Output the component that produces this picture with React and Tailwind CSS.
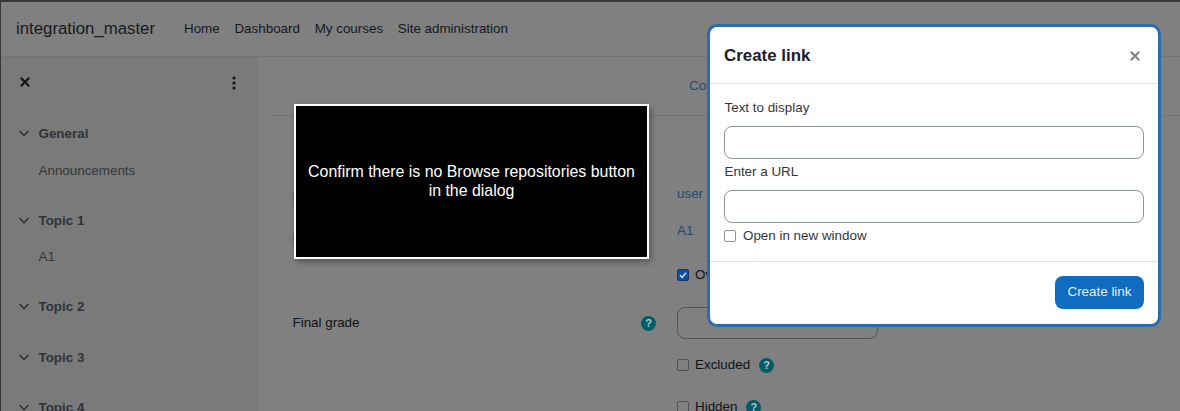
import React from "react";

const Chevron = () => (
  <svg width="12" height="12" viewBox="0 0 12 12" fill="none" className="shrink-0">
    <path d="M1.5 3 6 7.5 10.5 3" stroke="#33383d" strokeWidth="1.6" />
  </svg>
);

const Help = () => (
  <span className="inline-flex w-[15px] h-[15px] rounded-full bg-[#005c66] text-[#b5c9cc] text-[11px] font-bold leading-none items-center justify-center shrink-0">?</span>
);

function Topic({ title, item, className }) {
  return (
    <div className={className}>
      <div className="flex items-center h-[20px]">
        <span className="w-[12px] ml-[17px] mr-[8.5px] flex"><Chevron /></span>
        <span className="text-[13.4px] font-bold text-[#2f3338]">{title}</span>
      </div>
      {item && <div className="ml-[37.5px] mt-[17px] h-[20px] leading-[20px] text-[13.4px] text-[#33373b]">{item}</div>}
    </div>
  );
}

export default function App() {
  return (
    <div className="relative w-[1180px] h-[411px] overflow-hidden bg-[#808080] text-[13.4px] text-[#101214] font-['Liberation_Sans',Arial,sans-serif] border-l border-t-2 border-[#3a3538]">
      <header className="h-[55px] flex items-center border-b border-[#737373]">
        <span className="ml-[15px] text-[16.8px] text-[#17191c]">integration_master</span>
        <nav className="ml-[29px] flex gap-[14.7px] text-[13.4px] text-[#15181b]">
          <span>Home</span>
          <span>Dashboard</span>
          <span>My courses</span>
          <span>Site administration</span>
        </nav>
      </header>

      <div className="flex h-[354px]">
        <aside className="w-[257px] bg-[#7a7a7a] shrink-0 overflow-hidden">
          <div className="flex items-center justify-between h-[50px] pl-[19px] pr-[22px]">
            <svg width="10" height="10" viewBox="0 0 10 10"><path d="M.8.8l8.4 8.4m0-8.4L.8 9.2" stroke="#101214" strokeWidth="2" /></svg>
            <svg width="4" height="14" viewBox="0 0 4 14" className="mt-[2px]"><circle cx="2" cy="2" r="1.6" fill="#101214" /><circle cx="2" cy="7" r="1.6" fill="#101214" /><circle cx="2" cy="12" r="1.6" fill="#101214" /></svg>
          </div>
          <Topic title="General" item="Announcements" className="mt-[17px]" />
          <Topic title="Topic 1" className="mt-[30px]" />
          <div className="ml-[37.5px] mt-[16px] h-[20px] leading-[20px] text-[#33373b]">A1</div>
          <Topic title="Topic 2" className="mt-[30px]" />
          <Topic title="Topic 3" className="mt-[31px]" />
          <Topic title="Topic 4" className="mt-[30px]" />
        </aside>

        <main className="flex-1 min-w-0 pl-[14px]">
          <div className="h-[59px] border-b border-[#737373] pl-[417px] pt-[19px] leading-[20px] text-[#1d4a75]">Course</div>
          <div className="relative">
            <div className="flex h-[87px]">
              <div className="w-[405px] pt-[76px] pl-[21px]"><span className="block w-[2px] h-[9px] bg-[#6f6350]" /></div>
              <div className="pt-[68px] text-[#1d4a75]">user competency</div>
            </div>
            <div className="flex h-[38px]">
              <div className="w-[405px] pt-[31px] pl-[21px]"><span className="block w-[2px] h-[8px] bg-[#6f6350]" /></div>
              <div className="pt-[18px] text-[#1d4a75]">A1</div>
            </div>
            <div className="ml-[405px] mt-[24px] h-[20px] flex items-center gap-[6px]">
              <span className="w-[12px] h-[12px] rounded-[2px] bg-[#0b4f9e] border border-[#1a3560] flex items-center justify-center">
                <svg width="10" height="10" viewBox="0 0 10 10"><path d="M2 5.2l2.2 2.2L8 2.8" stroke="#d5dde8" strokeWidth="1.6" fill="none" /></svg>
              </span>
              <span>Overall</span>
            </div>
            <div className="flex mt-[22px] h-[32px]">
              <div className="w-[385px] pl-[20.5px] pr-[1px] flex items-center justify-between">
                <span>Final grade</span>
                <Help />
              </div>
              <div className="ml-[20px] w-[201px] h-[32px] rounded-[8px] border border-[#4e5256]" />
            </div>
            <div className="ml-[405px] mt-[16px] h-[20px] flex items-center">
              <span className="w-[12px] h-[12px] rounded-[2px] border border-[#4e5256]" />
              <span className="ml-[6px]">Excluded</span>
              <span className="ml-[9px] flex"><Help /></span>
            </div>
            <div className="ml-[405px] mt-[22px] h-[20px] flex items-center">
              <span className="w-[12px] h-[12px] rounded-[2px] border border-[#4e5256]" />
              <span className="ml-[6px]">Hidden</span>
              <span className="ml-[9px] flex"><Help /></span>
            </div>
          </div>
        </main>
      </div>

      {/* Tour step callout */}
      <div className="absolute left-[293px] top-[102px] w-[355px] h-[155px] bg-black border-2 border-white shadow-[2px_3px_6px_rgba(0,0,0,0.35)] flex items-center justify-center text-center text-white text-[15.9px] leading-[19px] px-[8px] pb-[1px]">
        Confirm there is no Browse repositories button in the dialog
      </div>

      {/* Modal */}
      <div className="absolute left-[706px] top-[22px] w-[454px] h-[303px] bg-white border-[3px] border-[#2a6cad] rounded-[10px] flex flex-col text-[13.4px] text-[#33373b]">
        <div className="h-[57px] flex items-center justify-between pl-[14px] pr-[18px] pt-[1px] border-b border-[#dee2e6] shrink-0">
          <span className="text-[16.9px] font-bold text-[#1d2125]">Create link</span>
          <svg width="10" height="10" viewBox="0 0 10 10"><path d="M.8.8l8.4 8.4m0-8.4L.8 9.2" stroke="#808080" strokeWidth="2" /></svg>
        </div>
        <div className="flex-1 px-[14px] pt-[14px]">
          <div className="h-[20px] leading-[20px] pl-[0.5px]">Text to display</div>
          <div className="mt-[8px] h-[33px] rounded-[8px] border border-[#8f959e]" />
          <div className="mt-[3px] h-[20px] leading-[20px] pl-[0.5px]">Enter a URL</div>
          <div className="mt-[8px] h-[33px] rounded-[8px] border border-[#8f959e]" />
          <div className="mt-[3px] h-[20px] flex items-center">
            <span className="w-[12px] h-[12px] rounded-[2px] border border-[#8f959e]" />
            <span className="ml-[7px]">Open in new window</span>
          </div>
        </div>
        <div className="h-[63px] border-t border-[#dee2e6] flex items-center justify-end pr-[14px] pb-[2px] shrink-0">
          <button className="w-[89px] h-[33px] rounded-[8px] bg-[#0f6cbf] text-[#e4eef7] text-[13.4px]">Create link</button>
        </div>
      </div>
    </div>
  );
}
